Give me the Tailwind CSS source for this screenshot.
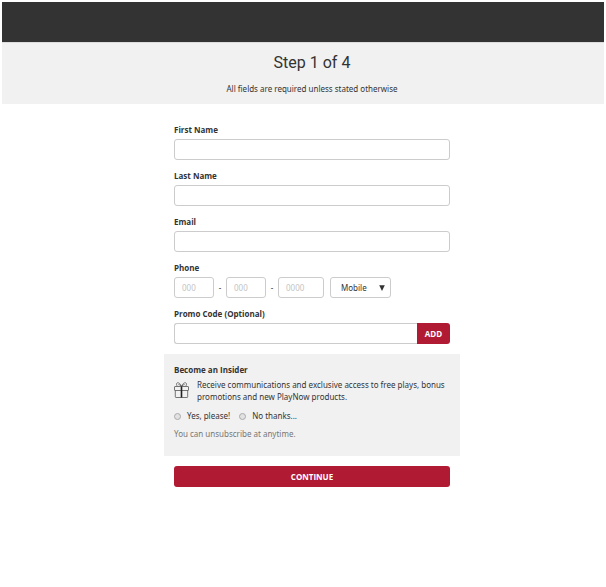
<!DOCTYPE html>
<html lang="en">
<head>
<meta charset="utf-8">
<meta name="viewport" content="width=device-width, initial-scale=1">
<title>Step 1 of 4</title>
<script src="https://cdn.jsdelivr.net/npm/@tailwindcss/browser@4"></script>
</head>
<body class="min-h-screen bg-white px-0.5 pt-0.5 font-['Noto_Sans','Liberation_Sans',sans-serif] text-[8px] leading-3 text-[#333]">
<header class="h-10 bg-[#333]"></header>
<section class="border-t border-[#ddd] bg-[#f1f1f1] pt-2 pb-[5px] pl-[18px] text-center">
  <h1 class="font-[Roboto,'Liberation_Sans',sans-serif] text-base leading-6">Step 1 of 4</h1>
  <p class="mt-1 leading-5">All fields are required unless stated otherwise</p>
</section>
<main class="pt-5 pl-[18px]">
  <form class="mx-auto w-full max-w-[296px]">
    <div class="flex flex-col gap-2.5 px-2.5">
      <div class="flex flex-col gap-[3px]">
        <label for="first" class="font-['Open_Sans',sans-serif] font-bold">First Name</label>
        <input id="first" type="text" class="h-[21px] w-full rounded-[3px] border border-[#ccc] bg-white px-2">
      </div>
      <div class="flex flex-col gap-[3px]">
        <label for="last" class="font-['Open_Sans',sans-serif] font-bold">Last Name</label>
        <input id="last" type="text" class="h-[21px] w-full rounded-[3px] border border-[#ccc] bg-white px-2">
      </div>
      <div class="flex flex-col gap-[3px]">
        <label for="email" class="font-['Open_Sans',sans-serif] font-bold">Email</label>
        <input id="email" type="email" class="h-[21px] w-full rounded-[3px] border border-[#ccc] bg-white px-2">
      </div>
      <div class="flex flex-col gap-[3px]">
        <label for="area" class="font-['Open_Sans',sans-serif] font-bold">Phone</label>
        <div class="flex items-center">
          <input id="area" type="tel" placeholder="000" class="h-[21px] w-10 rounded-[3px] border border-[#ccc] bg-white px-[7px] placeholder:text-[#c4c4c4]">
          <span class="w-3 text-center">-</span>
          <input type="tel" aria-label="Phone prefix" placeholder="000" class="h-[21px] w-10 rounded-[3px] border border-[#ccc] bg-white px-[7px] placeholder:text-[#c4c4c4]">
          <span class="w-3 text-center">-</span>
          <input type="tel" aria-label="Phone line number" placeholder="0000" class="h-[21px] w-[46px] rounded-[3px] border border-[#ccc] bg-white px-[7px] placeholder:text-[#c4c4c4]">
          <div class="relative ml-1.5">
            <select aria-label="Phone type" class="h-[21px] w-[61px] appearance-none rounded-[3px] border border-[#ccc] bg-white pl-2.5">
              <option>Mobile</option>
              <option>Home</option>
              <option>Work</option>
            </select>
            <svg class="pointer-events-none absolute top-2 right-1.5 h-[6px] w-[6px]" viewBox="0 0 6 6" aria-hidden="true"><path d="M0.2 0.2h5.6L3 6z" fill="#333"/></svg>
          </div>
        </div>
      </div>
      <div class="flex flex-col gap-[3px]">
        <label for="promo" class="font-['Open_Sans',sans-serif] font-bold">Promo Code (Optional)</label>
        <div class="flex">
          <input id="promo" type="text" class="h-[21px] min-w-0 flex-1 rounded-l-[3px] border border-r-0 border-[#ccc] bg-white px-2">
          <button type="button" class="h-[21px] w-[33px] rounded-r-[3px] bg-[#b11a33] font-['Open_Sans',sans-serif] font-bold text-white">ADD</button>
        </div>
      </div>
    </div>
    <fieldset class="mt-2.5 bg-[#f1f1f1] px-2.5 pt-2.5 pb-4">
      <h2 class="font-['Open_Sans',sans-serif] font-bold">Become an Insider</h2>
      <div class="mt-[3px] flex gap-2">
        <svg class="mt-[3px] -mb-1 h-4 w-[15px] shrink-0" viewBox="0 0 15 16" fill="none" stroke="#555" stroke-width="0.8" aria-hidden="true">
          <rect x="0.5" y="4.500" width="14" height="4" rx="0.5"/>
          <path d="M1.300 8.500v6.300q0 .7.7.7h11q.7 0 .7-.7V8.500"/>
          <path d="M7.500 4.500C6.500 1.800 4.800.4 3.300.8 2 1.300 2.300 3.400 3.600 4.300M7.500 4.500C8.500 1.800 10.200.4 11.700.8 13 1.300 12.700 3.400 11.400 4.300M7.500 4.500Q5.800 2.300 4.400 2.600M7.500 4.500Q9.200 2.300 10.600 2.600"/>
          <path d="M7.500 4.500v11" stroke="#222" stroke-width="1.600"/>
        </svg>
        <p>Receive communications and exclusive access to free plays, bonus promotions and new PlayNow products.</p>
      </div>
      <div class="mt-[7px] flex items-center gap-[9px]">
        <label class="flex items-center gap-[6px]"><input type="radio" name="insider" class="h-[7px] w-[7px] appearance-none rounded-full border border-[#aaa] bg-[#e2e2e2] checked:bg-[#333]">Yes, please!</label>
        <label class="flex items-center gap-[6px]"><input type="radio" name="insider" class="h-[7px] w-[7px] appearance-none rounded-full border border-[#aaa] bg-[#e2e2e2] checked:bg-[#333]">No thanks...</label>
      </div>
      <p class="mt-1.5 text-[#777]">You can unsubscribe at anytime.</p>
    </fieldset>
    <div class="mt-2.5 px-2.5">
      <button type="submit" class="h-[21px] w-full rounded-[3px] bg-[#b11a33] font-['Open_Sans',sans-serif] font-bold text-white">CONTINUE</button>
    </div>
  </form>
</main>
</body>
</html>
